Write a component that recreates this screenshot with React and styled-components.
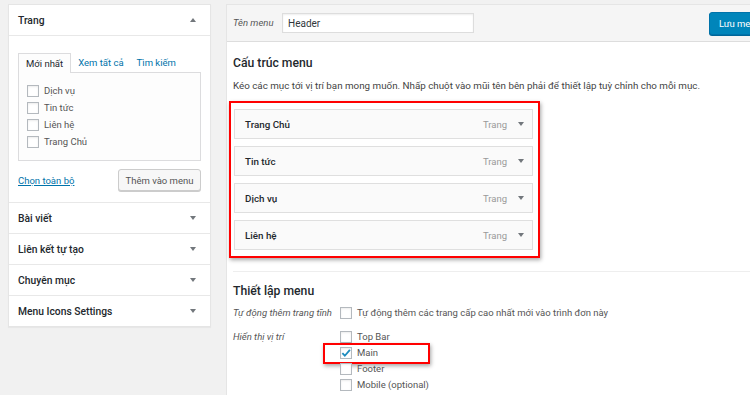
import React from 'react';
import styled, { createGlobalStyle } from 'styled-components';

const GlobalStyle = createGlobalStyle`
  html, body {
    margin: 0;
    padding: 0;
    background: #f1f1f1;
    overflow: hidden;
  }
  body {
    font-family: Roboto, "Noto Sans", sans-serif;
    font-size: 9.5px;
    color: #444;
  }
`;

const Page = styled.div`
  display: flex;
  align-items: flex-start;
  gap: 15px;
  padding: 4px 0 0 8px;
  width: 1000px;
  height: 395px;
  box-sizing: border-box;
`;

/* ---------- left column ---------- */

const SidePanel = styled.div`
  width: 203px;
  box-sizing: border-box;
  background: #fff;
  border: 1px solid #e5e5e5;
  box-shadow: 0 1px 1px rgba(0, 0, 0, 0.04);
`;

const SectionHead = styled.div`
  display: flex;
  align-items: center;
  justify-content: space-between;
  height: 30px;
  padding: 0 9px;
  border-top: ${({ first }) => (first ? 'none' : '1px solid #e8e8e8')};
  font-size: 10.3px;
  font-weight: 500;
  color: #23282d;
  white-space: nowrap;
`;

const Caret = styled.span`
  width: 0;
  height: 0;
  border-left: 3.5px solid transparent;
  border-right: 3.5px solid transparent;
  ${({ up }) =>
    up ? 'border-bottom: 4px solid #72777c;' : 'border-top: 4px solid #72777c;'}
  margin-right: ${({ inset }) => inset || 0}px;
`;

const SectionBody = styled.div`
  border-top: 1px solid #e8e8e8;
  padding: 17px 9px 11px;
`;

const Tabs = styled.div`
  display: flex;
  align-items: flex-end;
  height: 19px;
`;

const Tab = styled.span`
  display: flex;
  align-items: center;
  box-sizing: border-box;
  height: 19px;
  padding: 0 ${({ active }) => (active ? '7px' : '6px')};
  margin-left: ${({ active }) => (active ? '0' : '1px')};
  color: ${({ active }) => (active ? '#23282d' : '#0073aa')};
  white-space: nowrap;
  ${({ active }) =>
    active &&
    `
    border: 1px solid #dcdcde;
    border-bottom: none;
    background: #fdfdfd;
    position: relative;
    z-index: 1;
    margin-bottom: -1px;
    height: 20px;
  `}
`;

const TabPanel = styled.div`
  height: 89px;
  box-sizing: border-box;
  border: 1px solid #dcdcde;
  background: #fdfdfd;
  padding: 12px 8px 0;
  display: flex;
  flex-direction: column;
  gap: 5px;
`;

const Check = styled.span`
  display: inline-flex;
  align-items: center;
  justify-content: center;
  width: 12px;
  height: 12px;
  flex: none;
  box-sizing: border-box;
  border: 1px solid #b4b9be;
  background: #fff;
  box-shadow: inset 0 1px 2px rgba(0, 0, 0, 0.08);
`;

const CheckRow = styled.label`
  display: flex;
  align-items: center;
  gap: 5px;
  height: 12px;
  line-height: 12px;
  color: #555;
  white-space: nowrap;
  position: relative;
`;

const Actions = styled.div`
  display: flex;
  align-items: center;
  justify-content: space-between;
  margin-top: 8px;
`;

const TextLink = styled.a`
  color: #0073aa;
  text-decoration: underline;
`;

const GhostButton = styled.button`
  height: 22px;
  width: 83px;
  padding: 0;
  font-family: inherit;
  font-size: 9.5px;
  color: #555;
  background: #f7f7f7;
  border: 1px solid #ccc;
  border-radius: 3px;
  box-shadow: 0 1px 0 #ccc;
`;

/* ---------- right column ---------- */

const MainPanel = styled.div`
  width: 560px;
  flex: none;
  box-sizing: border-box;
  background: #fff;
  border: 1px solid #e5e5e5;
  min-height: 400px;
`;

const TopBar = styled.div`
  display: flex;
  align-items: center;
  height: 36px;
  padding: 0 6px;
  background: #f5f5f5;
  border-bottom: 1px solid #dddddd;
`;

const FieldLabel = styled.span`
  font-style: italic;
  color: #555;
  line-height: 12px;
  width: ${({ w }) => w}px;
  flex: none;
  white-space: nowrap;
`;

const NameInput = styled.div`
  width: 192px;
  height: 20px;
  box-sizing: border-box;
  display: flex;
  align-items: center;
  padding: 0 5px;
  border: 1px solid #ddd;
  box-shadow: inset 0 1px 2px rgba(0, 0, 0, 0.07);
  background: #fff;
  color: #32373c;
  font-size: 10px;
`;

const PrimaryButton = styled.button`
  margin-left: 235px;
  height: 23px;
  padding: 0 9px;
  font-family: inherit;
  font-size: 9.5px;
  letter-spacing: -0.1px;
  color: #fff;
  background: #0085ba;
  border: 1px solid #0073aa;
  border-radius: 3px;
  box-shadow: 0 1px 0 #006799;
  white-space: nowrap;
`;

const Body = styled.div`
  padding: 0 6px;
`;

const Heading = styled.h3`
  margin: 0;
  padding-top: ${({ pt }) => pt}px;
  height: 24px;
  line-height: 24px;
  font-size: 12.2px;
  font-weight: 500;
  color: #23282d;
`;

const Description = styled.p`
  margin: 0;
  padding-top: 3px;
  line-height: 16px;
  font-size: 9.8px;
  color: #444;
  white-space: nowrap;
`;

const Highlight = styled.div`
  margin: 7px 0 0 -4px;
  width: 311px;
  box-sizing: border-box;
  border: 2px solid #f00;
  box-shadow: 1px 2px 4px rgba(0, 0, 0, 0.35);
  padding: 6px 5px 6px 3px;
  display: flex;
  flex-direction: column;
  gap: 7px;
`;

const MenuItem = styled.div`
  display: flex;
  align-items: center;
  height: 30px;
  box-sizing: border-box;
  padding: 0 8px 0 10px;
  background: #fafafa;
  border: 1px solid #dfdfdf;
  font-size: 9.8px;
  font-weight: 500;
  color: #23282d;
`;

const ItemTitle = styled.span`
  flex: 1;
`;

const ItemType = styled.span`
  font-size: 9.5px;
  font-weight: 400;
  color: #999;
  margin-right: 11px;
`;

const Divider = styled.div`
  margin-top: 13px;
  border-top: 1px solid #eee;
`;

const SettingRow = styled.div`
  display: flex;
  align-items: flex-start;
  margin-top: ${({ mt }) => mt}px;
`;

const Options = styled.div`
  display: flex;
  flex-direction: column;
  gap: 4px;
`;

const Boxed = styled(CheckRow)`
  &::after {
    content: '';
    position: absolute;
    left: -17px;
    top: -4px;
    width: 107px;
    height: 21px;
    box-sizing: border-box;
    border: 2px solid #f00;
    box-shadow: 1px 2px 4px rgba(0, 0, 0, 0.35);
  }
`;

const Tick = () => (
  <svg width="11" height="10" viewBox="0 0 11 10">
    <path d="M1.5 5.2 L4.2 8 L9.8 1.5" fill="none" stroke="#1e8cbe" strokeWidth="2" />
  </svg>
);

const pages = ['Dịch vụ', 'Tin tức', 'Liên hệ', 'Trang Chủ'];
const sections = ['Bài viết', 'Liên kết tự tạo', 'Chuyên mục', 'Menu Icons Settings'];
const items = ['Trang Chủ', 'Tin tức', 'Dịch vụ', 'Liên hệ'];
const locations = ['Top Bar', 'Main', 'Footer', 'Mobile (optional)'];

export default function App() {
  return (
    <>
      <GlobalStyle />
      <Page>
        <SidePanel>
          <SectionHead first>
            Trang
            <Caret up inset={5} />
          </SectionHead>
          <SectionBody>
            <Tabs>
              <Tab active>Mới nhất</Tab>
              <Tab>Xem tất cả</Tab>
              <Tab>Tìm kiếm</Tab>
            </Tabs>
            <TabPanel>
              {pages.map((p) => (
                <CheckRow key={p}>
                  <Check />
                  {p}
                </CheckRow>
              ))}
            </TabPanel>
            <Actions>
              <TextLink>Chọn toàn bộ</TextLink>
              <GhostButton>Thêm vào menu</GhostButton>
            </Actions>
          </SectionBody>
          {sections.map((s) => (
            <SectionHead key={s}>
              {s}
              <Caret inset={5} />
            </SectionHead>
          ))}
        </SidePanel>

        <MainPanel>
          <TopBar>
            <FieldLabel w={49}>Tên menu</FieldLabel>
            <NameInput>Header</NameInput>
            <PrimaryButton>Lưu menu</PrimaryButton>
          </TopBar>
          <Body>
            <Heading pt={9}>Cấu trúc menu</Heading>
            <Description>
              Kéo các mục tới vị trí bạn mong muốn. Nhấp chuột vào mũi tên bên phải để thiết lập tuỳ chỉnh cho mỗi mục.
            </Description>
            <Highlight>
              {items.map((it) => (
                <MenuItem key={it}>
                  <ItemTitle>{it}</ItemTitle>
                  <ItemType>Trang</ItemType>
                  <Caret />
                </MenuItem>
              ))}
            </Highlight>
            <Divider />
            <Heading pt={7}>Thiết lập menu</Heading>
            <SettingRow mt={4}>
              <FieldLabel w={107}>Tự động thêm trang tĩnh</FieldLabel>
              <CheckRow>
                <Check />
                Tự động thêm các trang cấp cao nhất mới vào trình đơn này
              </CheckRow>
            </SettingRow>
            <SettingRow mt={12}>
              <FieldLabel w={107}>Hiển thị vị trí</FieldLabel>
              <Options>
                {locations.map((l) =>
                  l === 'Main' ? (
                    <Boxed key={l}>
                      <Check>
                        <Tick />
                      </Check>
                      {l}
                    </Boxed>
                  ) : (
                    <CheckRow key={l}>
                      <Check />
                      {l}
                    </CheckRow>
                  )
                )}
              </Options>
            </SettingRow>
          </Body>
        </MainPanel>
      </Page>
    </>
  );
}
